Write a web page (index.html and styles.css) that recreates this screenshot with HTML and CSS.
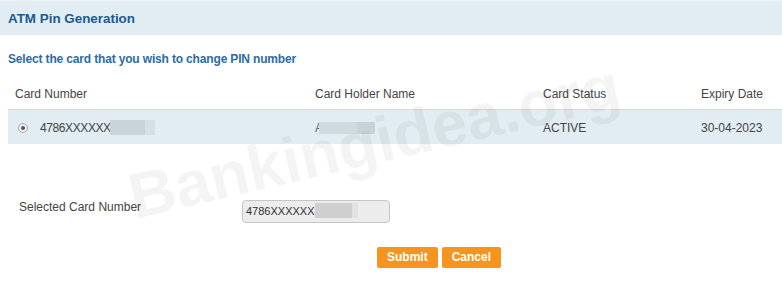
FILE: index.html
```html
<!DOCTYPE html>
<html lang="en">
<head>
<meta charset="utf-8">
<title>ATM Pin Generation</title>
<link rel="stylesheet" href="styles.css">
</head>
<body>
<div class="page">
  <div class="header"><h1 class="title">ATM Pin Generation</h1></div>
  <p class="subtitle">Select the card that you wish to change PIN number</p>
  <table class="cards">
    <colgroup>
      <col class="c1"><col class="c2"><col class="c3"><col class="c4">
    </colgroup>
    <thead>
      <tr><th>Card Number</th><th>Card Holder Name</th><th>Card Status</th><th>Expiry Date</th></tr>
    </thead>
    <tbody>
      <tr class="selected">
        <td><span class="radio"><span class="dot"></span></span><span class="num">4786XXXXXX</span><span class="mask m1"></span><span class="mask m1b"></span></td>
        <td><span class="partial">A</span><span class="mask m2"></span><span class="mask m2b"></span></td>
        <td>ACTIVE</td>
        <td>30-04-2023</td>
      </tr>
    </tbody>
  </table>
  <div class="selected-card">
    <span class="label">Selected Card Number</span>
    <div class="input">4786XXXXXX<span class="mask m3"></span><span class="mask m3b"></span></div>
  </div>
  <div class="actions">
    <button class="btn">Submit</button>
    <button class="btn">Cancel</button>
  </div>
  <div class="watermark">Bankingidea.org</div>
</div>
</body>
</html>
```
FILE: styles.css
```css
* { box-sizing: border-box; }
html, body { margin: 0; padding: 0; background: #fff; }
body { font-family: "Liberation Sans", Arial, sans-serif; color: #444; }
.page { position: relative; width: 782px; height: 281px; overflow: hidden; }

.header {
  height: 35px;
  background: #e1edf2;
  border-top: 1px solid #edf4f7;
  display: flex;
  align-items: center;
  padding-left: 8px;
}
.title { margin: 0; font-size: 13.4px; font-weight: bold; color: #1c5a92; }

.subtitle {
  margin: 17px 0 0;
  padding-left: 8px;
  font-size: 12px;
  line-height: 14px;
  font-weight: bold;
  letter-spacing: -0.16px;
  color: #2c6ca4;
}

.cards {
  margin: 11px 0 0 8px;
  width: 774px;
  border-collapse: separate;
  border-spacing: 0;
  table-layout: fixed;
  font-size: 12px;
}
.c1 { width: 300px; }
.c2 { width: 228px; }
.c3 { width: 158px; }
.c4 { width: 88px; }
.cards th {
  height: 33px;
  padding: 2px 7px 0;
  text-align: left;
  font-weight: normal;
  color: #444;
  border-bottom: 1px solid #d9d9d9;
  white-space: nowrap;
}
.cards td {
  height: 34px;
  padding: 1px 7px 0;
  background: #e1edf2;
  color: #444;
  white-space: nowrap;
}
.radio {
  display: inline-block;
  vertical-align: -1px;
  width: 10px;
  height: 10px;
  margin: 0 12px 0 3px;
  border: 1px solid #a9a9a9;
  border-radius: 50%;
  background: #f1f1f1;
  position: relative;
}
.radio .dot {
  position: absolute;
  left: 2px; top: 2px;
  width: 4px; height: 4px;
  border-radius: 50%;
  background: #555;
}
.num { letter-spacing: -0.4px; }
.mask { display: inline-block; vertical-align: -3px; height: 15px; }
.m1 { width: 35px; background: #c8d4da; margin-left: -1px; }
.m1b { width: 10px; background: #d5e0e5; }
.partial { color: #666; }
.m2 { width: 38px; background: #cfdadf; margin-left: -4px; height: 12px; vertical-align: -2px; }
.m2b { width: 18px; background: #c8d3d9; height: 12px; vertical-align: -2px; }

.selected-card {
  margin-top: 56px;
  padding-left: 19px;
  display: grid;
  grid-template-columns: 223px 148px;
  align-items: start;
}
.label { font-size: 12px; line-height: 14px; color: #444; }
.input {
  height: 23px;
  border: 1px solid #c6c6c6;
  border-radius: 4px;
  background: #ececec;
  padding-left: 3px;
  font-size: 11px;
  line-height: 21px;
  color: #333;
  white-space: nowrap;
}
.m3 { width: 37px; height: 15px; background: #cfcfcf; vertical-align: -3px; }
.m3b { width: 6px; height: 15px; background: #e2e2e2; vertical-align: -3px; }

.actions {
  margin-top: 24px;
  padding-left: 377px;
  display: flex;
  gap: 4px;
}
.btn {
  height: 21px;
  padding: 0 10px;
  border: none;
  border-radius: 2px;
  background: #f7941d;
  color: #fff;
  font-family: "Liberation Sans", Arial, sans-serif;
  font-size: 12px;
  font-weight: bold;
  line-height: 21px;
}

.watermark {
  position: absolute;
  left: 135px;
  top: 165px;
  font-size: 64px;
  line-height: 64px;
  font-weight: bold;
  white-space: nowrap;
  color: rgba(0, 0, 0, 0.045);
  transform-origin: 0 54px;
  transform: rotate(-13deg);
  pointer-events: none;
}
```
